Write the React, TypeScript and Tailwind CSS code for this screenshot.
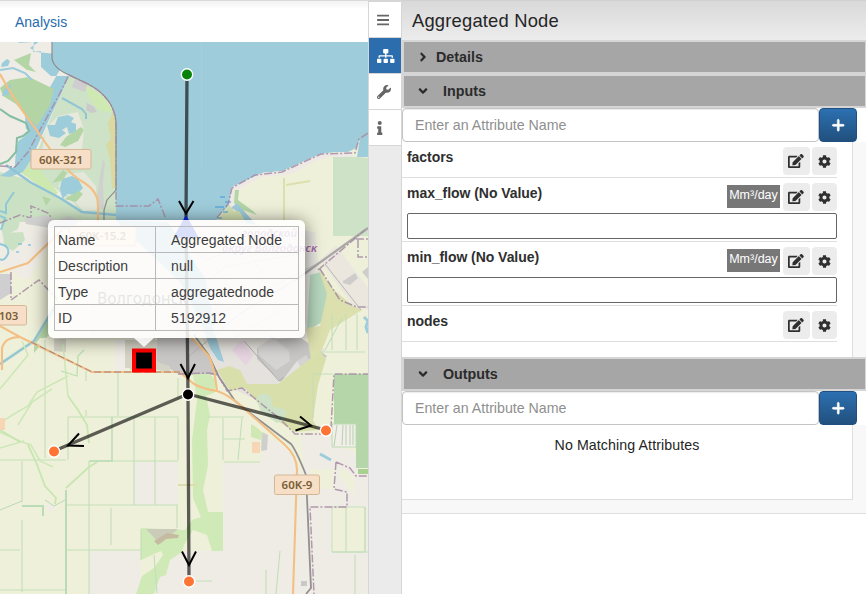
import React from "react";
import { FaBars, FaSitemap, FaWrench, FaInfo, FaEdit, FaCog, FaAngleRight, FaAngleDown } from "react-icons/fa";
import { FaPlus } from "react-icons/fa6";

const boundary = { fill: "none", stroke: "#a58ba5", strokeWidth: 1.5, strokeDasharray: "8 2 2 2", opacity: 0.85 };
const hedge = { fill: "none", stroke: "#c1dfb9", strokeWidth: 1.1 };

function RoadSign({ x, y, w, tx, label }: { x: number; y: number; w: number; tx?: number; label: string }) {
  return (
    <g>
      <rect x={x} y={y} width={w} height={19.5} rx={2} fill="#f6dfc6" stroke="#d5b795" />
      <text x={tx ?? x + w / 2} y={y + 14} textAnchor="middle" fontSize="11.5" fontWeight="600" fill="#7b5e38" className="font-['Noto_Sans',sans-serif]">
        {label}
      </text>
    </g>
  );
}

function Dot({ x, y, fill }: { x: number; y: number; fill: string }) {
  return <circle cx={x} cy={y} r={5.7} fill={fill} stroke="#fff" strokeWidth={1.4} />;
}

function MapView() {
  return (
    <svg className="block h-[552px] w-[368px]" viewBox="0 42 368 552">
      <rect y={42} width={368} height={552} fill="#eff0d9" />

      {/* west bank: bare land, meadows and woodland */}
      <path d="M0 42H52V58L69 75 88 84 104 97 113 112 116 122V225H200V300L160 340 90 338 60 340 35 285 0 265Z" fill="#efece5" />
      <path d="M69 75L88 84 104 97 113 112 116 122V220H62L76 205 40 176 20 172 38 150 58 100Z" fill="#cde2c6" />
      <path d="M86 85L104 97 114 112 108 113 97 108 88 96Z" fill="#cfe9b2" />
      <path d="M75 79l12 5-2 8-13-5z" fill="#cfcdd0" />
      <path d="M113 112l3 10v66h-4l-2-30-4-14 5-5-3-15z" fill="#d9d9a0" />
      <path d="M87 103l7 4 3 5-6 1-5-3z" fill="#cacaca" />
      <path d="M103 160l2 2-2 20 1 27h-8l3-28 2-11z" fill="#d0d1cf" />
      <path d="M46 128L58 116 78 112 84 130 82 150 60 160 40 162Z" fill="#e6e9dc" />
      <path d="M58 186L66 174 84 172 96 186 97 210 84 211Z" fill="#e3e8da" />
      <path d="M0 172L22 178 70 202 83 212V222H0Z" fill="#cbe1c3" />
      <path d="M20 172L36 164 58 193 53 196Z" fill="#cee9b0" />
      <path d="M42 196l9 3-5 7z" fill="#b4d5a6" />

      {/* channels and ponds */}
      <path d="M18 43l16-1-1 10 8-1 0 16 10 9 18 0-21 46-16 36-9 14-13 5-10-1 15-10 1-22 10-12-1-18 20-18 17-30-5-12-21-2-6-4 10-7 0-6-9-1z" fill="#9dccda" />
      <path d="M14 60l17-7-2 12 7 7-9-2z" fill="#b4d5a6" />
      <path d="M10 80L29 77 54 89 50 105 37 126 28 118 16 104 3 96 0 88Z" fill="#b3d4a4" />
      <path d="M0 115L15 121 29 131 24 137 18 141 16 155 5 165 0 165Z" fill="#efece5" />
      <path d="M0 109l10 7 16 7 3 8-6 5-6 2-1 14-8 9-8 3" fill="none" stroke="#83bea2" strokeWidth={2} />
      <path d="M2 63l5-4 3 2-2 5-7 1zM4 90l7-7-2 12-7 1z" fill="#9dccda" />
      <path d="M0 70L13 68 25 73 32 80" fill="none" stroke="#9dccda" strokeWidth={2} />
      <path d="M47 125l8 0 3-8 10-2 6 3-3 4 5 2 0 8-7 2-2-7-5 3 4 3-7 5-9-2z" fill="#9dccda" />
      <path d="M60 188l2-9 10-3 6 3 5 9-7 7-9-1-4 5-2-5z" fill="#9dccda" />
      <path d="M60 145l6-8 15-10 3 3-6 11-13 6zM64 199l15-8 4 3-7 8zM52 183l11-13 4 3-4 7z" fill="#b4d5a6" />
      <path d="M62 98l20 11 4 5 0 5" fill="none" stroke="#91c5d6" strokeWidth={2} />
      <path d="M6 165L30 182 60 198 82 212 117 215" fill="none" stroke="#8fc4d6" strokeWidth={2.4} />
      <path d="M0 211l6 2 0-9 8-12" fill="none" stroke="#8fc8d8" strokeWidth={2} />
      <path d="M0 220l9-7 11 8-2 8-15 8z" fill="#cbe1c3" />
      <path d="M3 233l20-1 2 8-12 11-9-5z" fill="#cbe1c3" />
      <path d="M0 216l5 2-4 12M0 244q10 2 8 10-4 8-8 5" fill="none" stroke="#8fc8d8" strokeWidth={2} />
      <path d="M18 244h4M16 252h3M28 245h3" stroke="#5fb0e0" />

      {/* reservoir */}
      <path d="M52 42V58Q53 68 69 75L88 84Q114 98 116 122V220L151 227 188 284 196 320 211 332 219 364 225 362 214 325 202 301 202 246 222 222 233 202 231 188 262 173 283 171 320 154 348 152 356 148 360 138 368 133V42Z" fill="#9fccda" />
      <path d="M233 187L262 173 283 171 320 154 335 152 356 153 368 157V400H215L220 250 217 218 232 202Z" fill="#eff0d9" />
      <path d="M232 202L218 219 222 235 248 226 240 207Z" fill="#d2deb1" />
      <path d="M232 187L262 173 283 171 320 154 348 152 356 158 330 157 314 162 292 174 262 177 235 192 235 212 229 205Z" fill="#efe9e5" />
      <path d="M235 190l4 0-1 10 15 11 4 4-14-5-9-7z" fill="#b4d5a6" />
      <path d="M237 203L260 229 248 226 240 212 231 208Z" fill="#9dcbda" />
      <path d="M333 157H357L368 158V236H333Z" fill="#cde2c6" />
      <path d="M360 138L368 133V157L357 157Z" fill="#9dccda" />
      <path d="M220 197h5M225 202h6M215 207h9M223 212h5M217 218h5" stroke="#3f99dd" strokeWidth={1} />
      <path d="M284 178V221M286 185L310 181" fill="none" stroke="#dedfaf" strokeWidth={2} />
      <path d="M52 42V58Q53 68 69 75L88 84Q114 98 116 122V190L107 200 104 210V222" fill="none" stroke="#8a8787" strokeWidth={1.1} />
      <path d="M69 75L88 84Q114 98 116 122V206H149L158 199 166 219M0 166L15 167 28 152 59 95 69 75M0 223L20 215 31 218 31 206 48 213 53 220" {...boundary} />
      <path d="M217 218L228 204 232 188 255 175 282 172 321 154 355 153 359 139 368 133" {...boundary} />
      <path d="M201.500 42V170" stroke="#abd2df" strokeWidth={0.5} />

      {/* settlement west of the city */}
      <path d="M24 219l20-4 13 5 12-4 11 5-12 8-18-1-24-4z" fill="#d1d1cf" />
      <path d="M11 285L30 278 45 250 57 238 62 300 40 331 32 340 0 360V290Z" fill="#eff0d9" />
      <path d="M0 274h11v19l-11 7z" fill="#cfced0" />
      <path d="M34 340l15-25v20l-15 18z" fill="#b7d7aa" />
      <path d="M11 272V300L39 280 57 299" {...boundary} />
      <path d="M40 338H124V371H94L36 343Z" fill="#eff0d9" />
      <path d="M115 340H125V371H115Z" fill="#efece5" />
      <path d="M0 364L34 341 54 308" fill="none" stroke="#a8d3d5" strokeWidth={3} />
      <path d="M0 364L34 341 54 308" fill="none" stroke="#7fb5c4" strokeWidth={0.8} />
      <path d="M54 339h12v13l-12-1zM125 340h40v29l-40-1z" fill="#d5d4c7" />

      {/* city blocks and industrial yards */}
      <path d="M90 220H220L315 232 322 300 310 338H90Z" fill="#e8e7e0" />
      <path d="M200 335H290L326 350 278 384 250 397 225 385Z" fill="#e5e1dc" />
      <path d="M115 220L168 222 205 278 215 326 202 325 180 282 158 261Z" fill="#9fccda" />
      <path d="M202 325L212 326 217 340 224 362 218 360 210 348Z" fill="#9fccda" />
      <path d="M157 338H192L212 361 217 375H180L157 361Z" fill="#c8c7c5" />
      <path d="M130 341h12v26l-12 3zM144 338h11v24l15 4v6l-26-4z" fill="#d5d3c5" />
      <path d="M257 348l15-9 29-1 26 18-7 8-23-3-16 21-24-23z" fill="#c8c7c6" />
      <path d="M258 347l15-10 16 13 1 11-14 9-17-15zM297 361l9-6 5 7-9 8z" fill="#d6d4d2" />
      <path d="M232 350l9-10 12 15-7 11z" fill="#e6d4e1" />
      <path d="M217 370L229 366 240 370 247 384 278 384 320 351 326 359 318 385 313 420 318 430 295 432 268 415 245 388 230 391Z" fill="#d9dfab" />
      <path d="M256 398l6-5 9 3 1 10 14 4-1 10-8 3-16-11z" fill="#cde2c6" />
      <path d="M310 275l11-3 8 14-7 36-15 9z" fill="#b6d6bd" />
      <path d="M318 268L334 290 352 305 362 310 330 330 321 352 311 360 306 328 320 326 327 294Z" fill="#dcdfae" />
      <path d="M185 244l22 16 30-13M165 315l60-48 80-14M179 335l38-20 105-54M235 337l48-28M190 290l27 35M213 264l23 31M240 239l23 35M258 325l33 28" fill="none" stroke="#c8c5c5" strokeWidth={0.8} />
      <path d="M244 341L279 381 284 377" fill="none" stroke="#a8a8a8" strokeWidth={0.9} />
      <path d="M320 260L336 245 368 288V310L353 306Z" fill="#ebe7df" />
      <path d="M343 281l12-8 3 5-8 7-7-2zM362 272l6-5v12z" fill="#cfcccc" />
      <path d="M188 357L241 313 297 279" fill="none" stroke="#bab7b7" strokeWidth={1} />
      <path d="M297 279L368 228" fill="none" stroke="#aaa7a7" strokeWidth={2.3} />
      <path d="M320 269L340 300 357 307H368M356 239H368M358 240V257H368M318 270L365 230" {...boundary} />
      <path d="M325 264L361 310" fill="none" stroke="#aaa" strokeWidth={0.8} />
      <path d="M364 317l4 4-2 6 2 6" fill="none" stroke="#9dccda" strokeWidth={3} />

      {/* fields and woodland south of the city */}
      <path d="M134 462h44v43h-44zM89 551h52v43H89zM45 505h12l-8 8z" fill="#efece5" />
      <path d="M223 463H260L266 437 282 444 294 458 305 478 301 435 332 434 333 447 352 450 368 474V594H152L160 577 178 552 223 550Z" fill="#efece5" />
      <path d="M193 374H210L217 382 214 393 206 396 210 415 207 430 208 465 203 490 208 512H223V551H212L207 535 193 530 184 545 182 552 170 560 166 575 160 577 154 594H136L142 576 154 568 163 555 161 551 141 560V528L185 530 192 520 201 517 193 498 192 440 197 400Z" fill="#d0eab7" />
      <path d="M146 529h32l-18 15z" fill="#cbcbb9" />
      <path d="M154 541l13-8 12 2-1 3-12 1-8 6z" fill="#c5bba0" />
      <path d="M252 442h8v11h-8z" fill="#f6d6b4" />
      <path d="M262 432l6 3-1 15-6 1z" fill="#cfcfce" />
      <path d="M251 424l5 3 7 6-2 7-10-3z" fill="#cfe8b4" />
      <path d="M334 374H368V468H356V424H334Z" fill="#b5d6a9" />
      <path d="M332 424h24v23h-24z" fill="#f1efe7" stroke="#bcdab5" />
      <path d="M337 425l-3 21M343 425l-1 20M346 425v20M350 425v20M353 425v20" stroke="#b9cfb4" />
      <path d="M358 469h10v5h-10z" fill="#a8d18f" />
      <path d="M332 507h33v45h-33z" fill="#eff0d9" stroke="#c5dfbe" />
      <path d="M310 469h25v20h-25zM340 468l14 8v20l-15-21z" fill="#eff0d9" />
      <path d="M346 507v45M365 552V507" {...hedge} />
      <path d="M45 340V458M86 371V381M86 410V416M118 373V416M68 460V417H178V460M0 460H66M22 461V502M22 520V592M0 550H20M0 590H66M89 461V594M90 461H178M134 417V505M155 417V505M66 505H178M111 508V545M67 550H141M178 378V400M177 505V528M141 529V560M208 417H244M223 418V460M224 462H260M242 418L238 460M223 439H245M313 374V418M313 374H333M321 352H365M325 350L342 318M332 314V350M346 314V350M357 314V350M332 552H368M266 570V594M280 551L276 594M355 555V594M196 581h16M154 555l3 38" {...hedge} />
      <path d="M0 423L14 414 28 406 37 392 68 376M0 432L22 442 31 445 40 461 53 467M0 448L24 441M0 389L28 355 22 341M63 344L68 396M18 425L32 402 52 389" fill="none" stroke="#cde8b8" strokeWidth={1.6} />
      <path d="M0 430L20 442M28 445L36 462 45 486 56 498 55 504M66 488L89 467 97 462M68 396L78 410 87 425 89 443" fill="none" stroke="#c7e6b1" strokeWidth={1.8} />
      <path d="M61 371L77 376 78 356 84 350" fill="none" stroke="#b9dfaf" strokeWidth={1.3} />
      <path d="M22 506H44M43 506V516M66 490V594" stroke="#b9dbb5" strokeWidth={2} />
      <path d="M89 461H112V417" fill="none" stroke="#b9dbb5" strokeWidth={1.5} />
      <path d="M45 500L54 506 65 500M0 510L22 501" fill="none" stroke="#b9dbb5" strokeWidth={1} />
      <path d="M0 418h5v12H0z" fill="#f6d6b4" />
      <path d="M178 485h19" stroke="#deddae" strokeWidth={2} />
      <path d="M320 454l11 6" stroke="#9dccda" strokeWidth={3} />
      <path d="M301 581h6v5h-6z" fill="#c8c8c8" />

      {/* trunk roads and railway */}
      <path d="M194 335L208 354 219 377 235 401 250 413 291 444Q296 450 306 475L311 588 306 594" fill="none" stroke="#929090" strokeWidth={1.8} />
      <path d="M0 74Q15 102 38 132 64 171 83 182 98 191 98 205V222M0 272L28 263 62 230M0 326L20 337 92 372H179Q186 377 194 384 203 389 217 391 230 395 249 413L285 445Q297 456 297 470L293 594M2 370V348Q5 337 20 337M188 334L207 354Q214 363 217 391" fill="none" stroke="#f3bf84" strokeWidth={2.1} />
      <path d="M31 342L92 372H180" fill="none" stroke="#a48486" strokeWidth={1} strokeDasharray="7 3" />
      <path d="M178 374L209 373 218 375 227 391 242 388 280 419 295 434 327 434 331 427 334 374H368M336 462L334 489 347 492V507H310L314 594M336 462L350 468 356 476H368" {...boundary} />

      <RoadSign x={31} y={149.500} w={60} label="60K-321" />
      <RoadSign x={69} y={226} w={67} label="60K-15.2" />
      <RoadSign x={-20} y={305.500} w={46.500} tx={8.5} label="103" />
      <RoadSign x={274.500} y={475} w={45} label="60K-9" />
      <text x={97} y={303.500} fontSize="15.500" fill="#555" letterSpacing=".2" className="font-['Noto_Sans',sans-serif]">Волгодонск</text>
      <g fill="#a06a9d" fontSize="11" fontStyle="italic" fontWeight="600" stroke="#f6eff0" strokeWidth={1.500} paintOrder="stroke" className="font-['Noto_Sans',sans-serif]">
        <text x={242} y={237} textLength={55} lengthAdjust="spacingAndGlyphs">городской</text>
        <text x={222} y={252} textLength={95} lengthAdjust="spacingAndGlyphs">округ Волгодонск</text>
      </g>

      {/* network links, heads and nodes */}
      <g fill="none" stroke="#000" strokeOpacity={0.62} strokeWidth={3.300}>
        <path d="M187 75L186 218 188 394 189 581M188 394L54 451M188 394L326 430" />
      </g>
      <path d="M186 215L199 238H173Z" fill="#0827dc" />
      <g fill="none" stroke="#000" strokeWidth={2}>
        <path d="M179 201L186 213.500 193.500 201M180.500 364L188 378 195 364M182 551.500L189 565 196 551.500M79 433.500L68 445.500 84 446M300 416.500L311 425.500 295.500 430.500" />
      </g>
      <Dot x={187} y={74.500} fill="#078407" />
      <Dot x={188} y={394.500} fill="#000" />
      <Dot x={54} y={451.500} fill="#ff7435" />
      <Dot x={326} y={430.500} fill="#ff7435" />
      <Dot x={189} y={581.500} fill="#ff7435" />
      <rect x={134} y={350.500} width={20} height={20} fill="#000" stroke="#f00" strokeWidth={4} />
    </svg>
  );
}

const facts = [["Name", "Aggregated Node"], ["Description", "null"], ["Type", "aggregatednode"], ["ID", "5192912"]];

function NodeTooltip() {
  return (
    <div className="absolute left-12 top-[220px] h-[118px] w-[257px] rounded-md bg-white/85 p-[6px] shadow-[0_2px_18px_rgba(0,0,0,0.55)]">
      <table className="h-[105px] w-[245px] border-collapse text-[14px] leading-5 text-[#3c3c3c]">
        <tbody>
          {facts.map(([k, v]) => (
            <tr key={k} className="h-[26px] border border-[#b9b9b9]">
              <td className="w-[101px] border-r border-[#b9b9b9] p-0 pl-[3px]">{k}</td>
              <td className="p-0 pl-[15px]"><span className="tracking-[.09px]">{v}</span></td>
            </tr>
          ))}
        </tbody>
      </table>
      <div className="absolute left-[86px] top-full h-0 w-0 border-x-[10px] border-t-[9px] border-x-transparent border-t-white/85" />
    </div>
  );
}

function SectionHeader({ title, open = true }: { title: string; open?: boolean }) {
  return (
    <button className="flex h-[34px] w-full shrink-0 items-center border-2 border-r border-[#d5d5d5] bg-[#a6a6a6] pl-[12px] text-[14.300px] font-bold text-[#2b2b2b]">
      {open ? <FaAngleDown className="mr-[13px] size-[14px]" /> : <FaAngleRight className="mr-[6px] size-[14px]" />}
      <span className="pt-[2px]">{title}</span>
    </button>
  );
}

function AttributeSearch() {
  return (
    <div className="flex h-[34px] w-full bg-white">
      <input placeholder="Enter an Attribute Name" className="h-[34px] w-[417px] rounded border border-[#c4c4c4] bg-white px-3 text-[14.200px] shadow-[inset_0_1px_1px_rgba(0,0,0,.08)] placeholder:text-[#8f8f8f]" />
      <button className="flex w-[38px] items-center justify-center rounded border border-[#205081] bg-gradient-to-b from-[#2c70b1] to-[#21507e] text-white">
        <FaPlus className="size-[14.500px] stroke-white stroke-[24px]" />
      </button>
    </div>
  );
}

function Attribute({ name, unit }: { name: string; unit?: string }) {
  return (
    <div className={`w-[435px] border-b border-[#dedede] pl-[5px] ${unit ? "h-16" : "h-9"}`}>
      <div className="flex h-[35px] items-start pt-[5px] text-[14px]">
        <strong className="flex-1 leading-5 text-[#2f2f2f] tracking-[-.05px]">{name}</strong>
        {unit && <span className="mr-[3px] mt-[2px] flex h-[23px] w-[53px] items-center justify-center bg-[#777] pb-[2px] text-[12.500px] text-white">{unit}</span>}
        <button className="mr-[2px] flex h-7 w-[27px] items-center justify-center rounded bg-[#ececec] pr-px text-[#2f2f2f]"><FaEdit className="h-[14px] w-[15.750px]" /></button>
        <button className="flex h-7 w-[25px] items-center justify-center rounded bg-[#ececec] text-[#2f2f2f]"><FaCog className="size-[13px]" /></button>
      </div>
      {unit && <input className="block h-[26px] w-[430px] rounded-xs border border-[#666] bg-white px-2" />}
    </div>
  );
}

export default function App() {
  const tools = [FaBars, FaSitemap, FaWrench, FaInfo];
  return (
    <div className="relative flex h-[594px] w-[866px] overflow-hidden bg-white font-['Liberation_Sans',Arial,sans-serif]">
      <main className="relative w-[368px] shrink-0">
        <nav className="h-[42px] border-t border-[#d9d9d9] bg-gradient-to-b from-[#f2f2f2] to-white to-20% pl-[15px] pt-[11px] text-[14px] leading-5 text-[#286bab]">
          <a>Analysis</a>
        </nav>
        <MapView />
        <NodeTooltip />
      </main>

      <aside className="flex w-[34px] shrink-0 flex-col border-x border-t-2 border-[#d6d6d6] bg-[#ebebeb]">
        {tools.map((Icon, i) => (
          <button key={i} className={`flex h-9 items-center border-b border-[#d6d6d6] pl-2 ${i === 1 ? "bg-[#2b6dad] text-white" : "bg-white text-[#666]"}`}>
            <Icon className={i === 1 ? "h-[14px] w-[17.500px]" : i === 3 ? "h-[14px] w-[5.500px]" : i === 0 ? "h-[14px] w-[12.300px]" : "size-[14px]"} />
          </button>
        ))}
      </aside>

      <section className="flex w-[464px] flex-col">
        <h1 className="h-10 border-t border-[#d0d0d0] bg-gradient-to-b from-[#d9d9d9] to-[#ececec] pl-[10px] pt-px text-[18.400px] leading-[38px] tracking-[.18px] text-[#252525]">Aggregated Node</h1>
        <SectionHeader title="Details" open={false} />
        <SectionHeader title="Inputs" />
        <div className="flex h-[249px] flex-col bg-[#f8f8f8]">
          <AttributeSearch />
          <div className="h-[215px] w-[451px] border-r border-[#dedede] bg-white">
            <Attribute name="factors" />
            <Attribute name="max_flow (No Value)" unit="Mm³/day" />
            <Attribute name="min_flow (No Value)" unit="Mm³/day" />
            <Attribute name="nodes" />
          </div>
        </div>
        <SectionHeader title="Outputs" />
        <div className="h-[123px] border-b border-[#dedede] bg-[#f8f8f8]">
          <AttributeSearch />
          <div className="h-[75px] w-[451px] border-b border-r border-[#dedede] bg-white pt-[10px] text-center text-[14.200px] leading-5 tracking-[.1px] text-[#252525]">No Matching Attributes</div>
        </div>
      </section>
    </div>
  );
}
